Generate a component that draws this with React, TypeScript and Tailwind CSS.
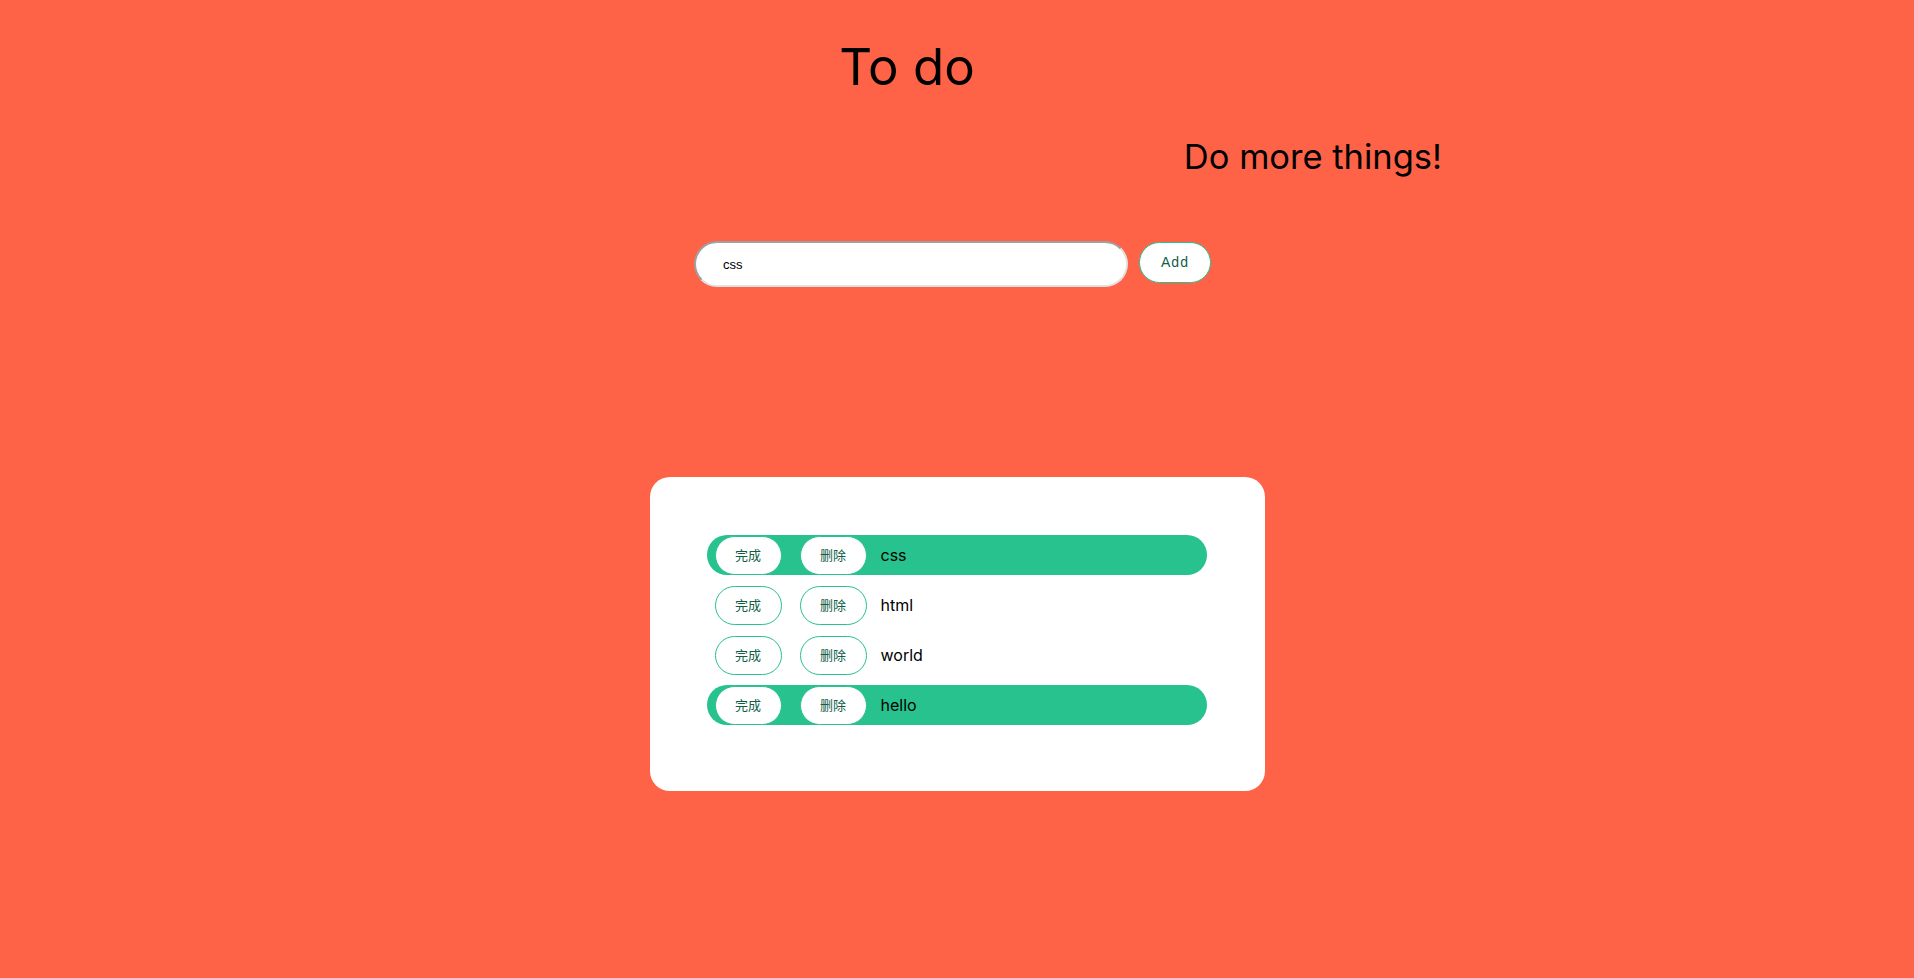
import { useState } from "react";

type Todo = {
  id: number;
  text: string;
  done: boolean;
};

const INITIAL: Todo[] = [
  { id: 1, text: "css", done: true },
  { id: 2, text: "html", done: false },
  { id: 3, text: "world", done: false },
  { id: 4, text: "hello", done: true },
];

const pill =
  "h-[39px] w-[67px] rounded-full border border-[#27c28d] bg-white font-['Noto_Sans_CJK_SC',sans-serif] text-[13px] text-[#0f5e48]";

function TodoRow({ todo, onToggle, onRemove }: { todo: Todo; onToggle: () => void; onRemove: () => void }) {
  return (
    <li className={"flex h-10 items-center rounded-full pl-[8px] " + (todo.done ? "bg-[#27c28d]" : "bg-transparent")}>
      <button onClick={onToggle} className={pill}>
        完成
      </button>
      <button onClick={onRemove} className={"ml-[18px] " + pill}>
        删除
      </button>
      <span className="ml-[14px] font-['Inter',sans-serif] text-[16px] text-black">{todo.text}</span>
    </li>
  );
}

export default function App() {
  const [todos, setTodos] = useState<Todo[]>(INITIAL);
  const [value, setValue] = useState("css");

  const add = () => {
    if (!value.trim()) return;
    setTodos([...todos, { id: Date.now(), text: value, done: false }]);
    setValue("");
  };

  return (
    <div className="min-h-[978px] w-full bg-[#ff6347] font-['Inter',sans-serif] text-black">
      <header className="flex justify-center pt-[36px]">
        <h1 className="mr-[100px] text-[51px] leading-[62px]">To do</h1>
      </header>

      <div className="flex justify-end pr-[472px] pt-[38px]">
        <p className="text-[34.5px] leading-[42px]">Do more things!</p>
      </div>

      <div className="flex justify-center pt-[63px]">
        <div className="mr-[9px] flex items-start gap-[11px]">
          <input
            value={value}
            onChange={(e) => setValue(e.target.value)}
            className="h-[46px] w-[434px] rounded-full border-2 border-b-[#e2e2e2] border-l-[#a0a0a0] border-r-[#e2e2e2] border-t-[#a0a0a0] bg-white px-[27px] font-['Liberation_Sans',Arial,sans-serif] text-[13px] text-black outline-none"
          />
          <button
            onClick={add}
            className="mt-px h-[41px] w-[72px] rounded-full border border-[#27c28d] bg-white font-['Liberation_Sans',Arial,sans-serif] text-[14px] tracking-[1px] text-[#0f5e48]"
          >
            Add
          </button>
        </div>
      </div>

      <main className="mx-auto mt-[190px] w-[615px] rounded-[20px] bg-white pb-[66px] pl-[57px] pr-[58px] pt-[58px]">
        <ul className="flex flex-col gap-[10px]">
          {todos.map((t) => (
            <TodoRow
              key={t.id}
              todo={t}
              onToggle={() => setTodos(todos.map((x) => (x.id === t.id ? { ...x, done: !x.done } : x)))}
              onRemove={() => setTodos(todos.filter((x) => x.id !== t.id))}
            />
          ))}
        </ul>
      </main>
    </div>
  );
}
